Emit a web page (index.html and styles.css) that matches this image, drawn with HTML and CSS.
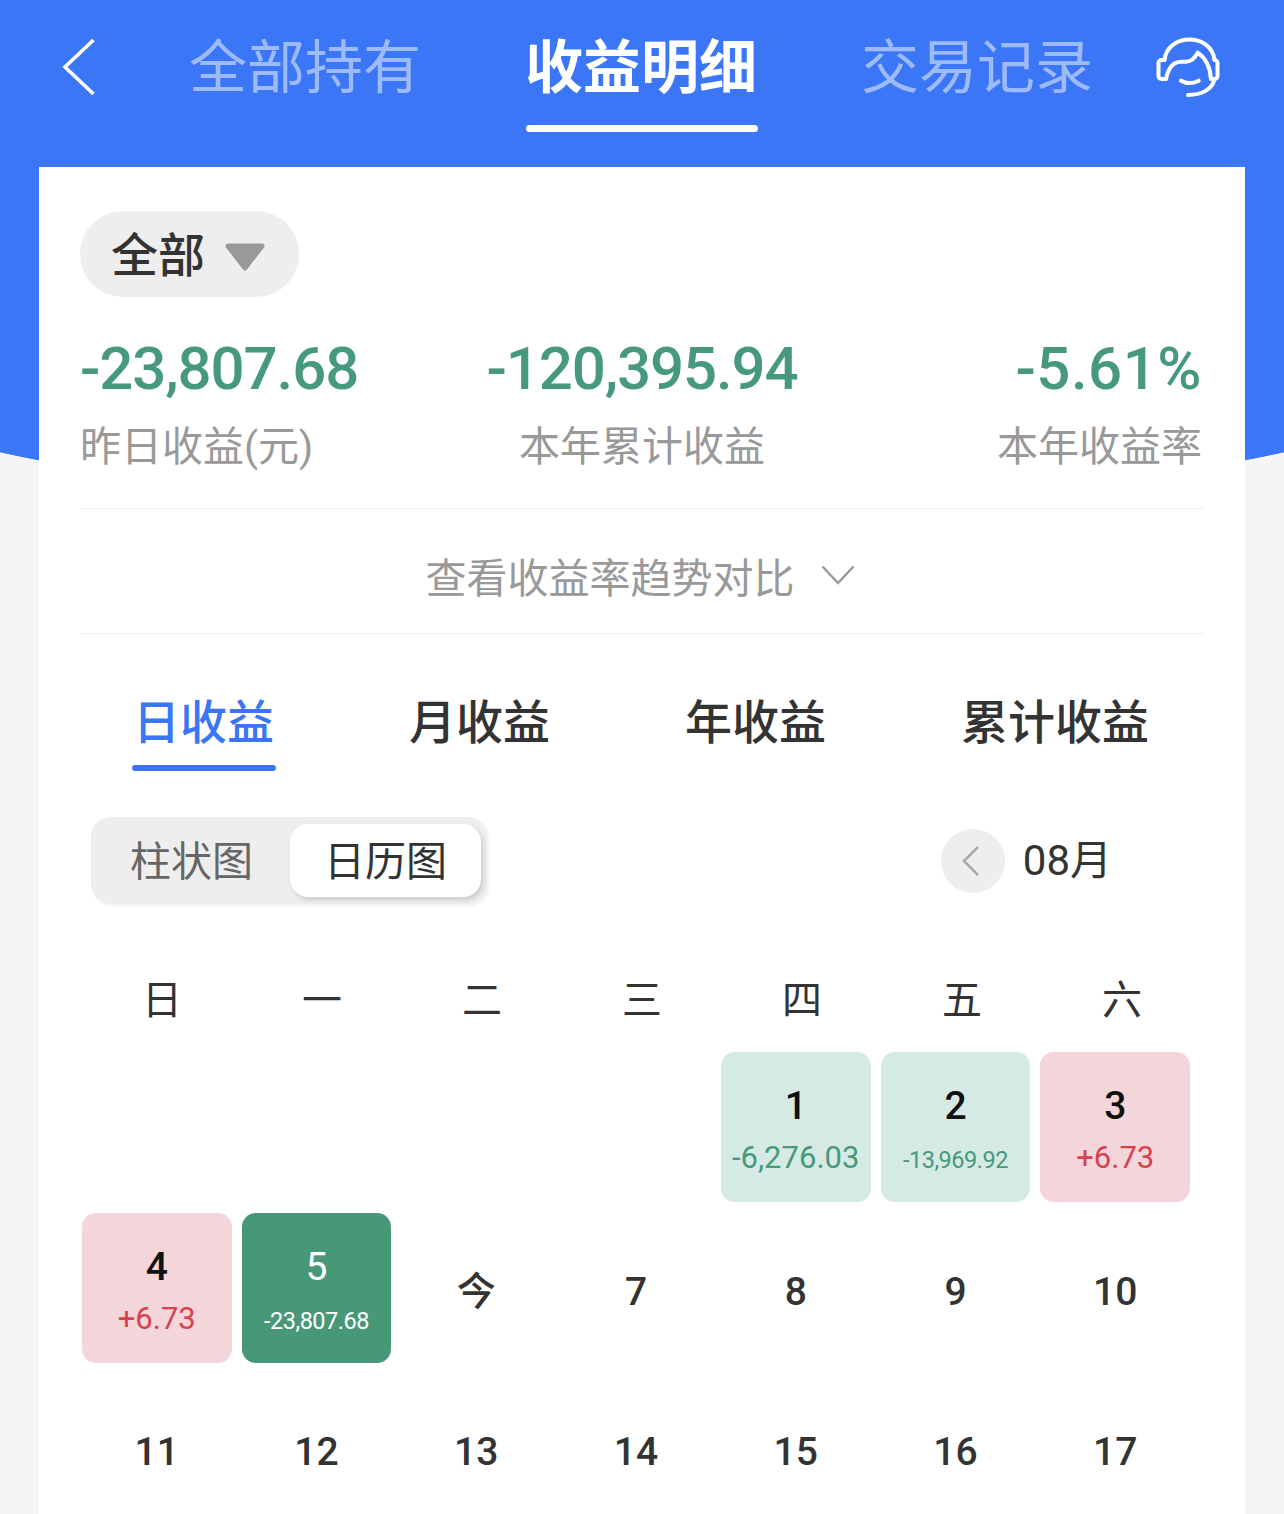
FILE: index.html
```html
<!DOCTYPE html>
<html lang="zh-CN">
<head>
  <meta charset="UTF-8">
  <title>收益明细</title>
  <link rel="stylesheet" href="styles.css">
</head>
<body>
  <!-- Blue backdrop with curved bottom edge -->
  <div class="backdrop"></div>

  <div class="page">
    <header class="topbar">
      <svg class="back" viewBox="0 0 34 58" aria-hidden="true">
        <path d="M31.5 2 L3 29 L31.5 56" />
      </svg>
      <nav class="topnav">
        <a class="topnav-item">全部持有</a>
        <a class="topnav-item active">收益明细</a>
        <a class="topnav-item">交易记录</a>
      </nav>
      <svg class="service" viewBox="0 0 66 62" aria-hidden="true">
        <path d="M9.5 24 C11 11 22 3.5 34.5 3.5 S58 11 59.5 24" />
        <path d="M9.5 24 H6.5 a3 3 0 0 0 -3 3 V40 a3 3 0 0 0 3 3 H11 C13 33 17 26 26 25.7 H31 C36 25.7 40 22 42.7 16.7 C49 21 55 29 56 43 H59.5 a3 3 0 0 0 3 -3 V27 a3 3 0 0 0 -3 -3" />
        <path d="M26 44.7 C31 47.6 38 47.6 43.7 44.7" />
        <path d="M59.3 44 C57 53 47 59 33 59" />
      </svg>
    </header>

    <main class="card">
      <button class="filter">
        <span class="filter-text">全部</span>
        <svg class="filter-arrow" viewBox="0 0 40 28" aria-hidden="true">
          <path d="M3 3 H37 L20 25 Z" />
        </svg>
      </button>

      <section class="stats">
        <div class="stat">
          <div class="stat-value">-23,807.68</div>
          <div class="stat-label">昨日收益(元)</div>
        </div>
        <div class="stat stat-center">
          <div class="stat-value">-120,395.94</div>
          <div class="stat-label">本年累计收益</div>
        </div>
        <div class="stat stat-right">
          <div class="stat-value">-5.61%</div>
          <div class="stat-label">本年收益率</div>
        </div>
      </section>

      <div class="compare">
        查看收益率趋势对比
        <svg class="compare-arrow" viewBox="0 0 34 20" aria-hidden="true">
          <path d="M1.5 1.5 L17 18 L32.5 1.5" />
        </svg>
      </div>

      <div class="period-tabs">
        <a class="period-tab active">日收益</a>
        <a class="period-tab">月收益</a>
        <a class="period-tab">年收益</a>
        <a class="period-tab">累计收益</a>
      </div>

      <div class="chart-bar">
        <div class="segment">
          <span class="segment-item">柱状图</span>
          <span class="segment-item selected">日历图</span>
        </div>
        <div class="month">
          <span class="month-prev">
            <svg viewBox="0 0 20 32" aria-hidden="true"><path d="M17 2 L3 16 L17 30" /></svg>
          </span>
          <span class="month-text">08月</span>
        </div>
      </div>

      <div class="weekdays">
        <span>日</span><span>一</span><span>二</span><span>三</span><span>四</span><span>五</span><span>六</span>
      </div>

      <div class="calendar">
        <div class="day"></div>
        <div class="day"></div>
        <div class="day"></div>
        <div class="day"></div>
        <div class="day chip loss"><b>1</b><span class="amount">-6,276.03</span></div>
        <div class="day chip loss"><b>2</b><span class="amount small">-13,969.92</span></div>
        <div class="day chip gain"><b>3</b><span class="amount">+6.73</span></div>

        <div class="day chip gain"><b>4</b><span class="amount">+6.73</span></div>
        <div class="day chip latest"><b>5</b><span class="amount small">-23,807.68</span></div>
        <div class="day"><b>今</b></div>
        <div class="day"><b>7</b></div>
        <div class="day"><b>8</b></div>
        <div class="day"><b>9</b></div>
        <div class="day"><b>10</b></div>

        <div class="day"><b>11</b></div>
        <div class="day"><b>12</b></div>
        <div class="day"><b>13</b></div>
        <div class="day"><b>14</b></div>
        <div class="day"><b>15</b></div>
        <div class="day"><b>16</b></div>
        <div class="day"><b>17</b></div>
      </div>
    </main>
  </div>
</body>
</html>
```

FILE: styles.css
```css
/* Base */
html, body {
  height: 1514px;
}

body {
  margin: 0;
  background-color: #f5f5f5;
  color: #333;
  font-family: Roboto, "Noto Sans CJK SC", sans-serif;
  overflow: hidden;
  position: relative;
}

.backdrop {
  position: absolute;
  top: 0;
  left: 0;
  width: 100%;
  height: 506px;
  background:
    linear-gradient(#3b76f6, #3b76f6) top / 100% 374px no-repeat,
    radial-gradient(800px 132px at 50% 374px, #3b76f6 99.6%, transparent 100%);
}

.page {
  position: relative;
}

/* Top bar */
.topbar {
  height: 167px;
  box-sizing: border-box;
  padding: 36px 62px 0 62px;
  display: flex;
  align-items: flex-start;
}

.back {
  width: 34px;
  height: 58px;
  margin-top: 2px;
  fill: none;
  stroke: #fff;
  stroke-width: 3.6;
}

.topnav {
  margin-left: 93px;
  display: flex;
  gap: 108px;
}

.topnav-item {
  width: 228px;
  height: 96px;
  position: relative;
  font-size: 58px;
  line-height: 65px;
  font-weight: 400;
  color: rgba(255, 255, 255, 0.5);
  text-align: center;
  white-space: nowrap;
}

.topnav-item.active {
  color: #fff;
  font-weight: 700;
}

.topnav-item.active::after {
  content: "";
  position: absolute;
  left: 1px;
  right: -5px;
  top: 89px;
  height: 7px;
  border-radius: 4px;
  background-color: #fff;
}

.service {
  width: 66px;
  height: 62px;
  margin-left: 66px;
  fill: none;
  stroke: #fff;
  stroke-width: 4;
  stroke-linecap: round;
  stroke-linejoin: round;
}

/* White card */
.card {
  margin: 0 39px;
  height: 1347px;
  box-sizing: border-box;
  padding: 44px 41px 0 41px;
  background-color: #fff;
}

.filter {
  width: 219px;
  height: 86px;
  padding: 0 0 0 31px;
  border: none;
  border-radius: 43px;
  background-color: #eee;
  color: #333;
  font-family: inherit;
  font-size: 47px;
  font-weight: 500;
  display: flex;
  align-items: center;
}

.filter-text {
  margin-bottom: 6px;
}

.filter-arrow {
  width: 40px;
  height: 28px;
  margin-left: 20px;
  margin-top: 6px;
  fill: #999;
  stroke: #999;
  stroke-width: 5;
  stroke-linejoin: round;
}

/* Summary numbers */
.stats {
  display: grid;
  grid-template-columns: 1fr auto 1fr;
  padding-top: 36px;
  padding-bottom: 36px;
  border-bottom: 1px solid #eee;
}

.stat-value {
  font-size: 60px;
  line-height: 72px;
  font-weight: 500;
  letter-spacing: -1.1px;
  color: #46997a;
  white-space: nowrap;
}

.stat-label {
  margin-top: 17px;
  font-size: 41px;
  line-height: 50px;
  color: #999;
  white-space: nowrap;
}

.stat-center {
  text-align: center;
}

.stat-right {
  text-align: right;
  padding-right: 2px;
}

.stat-right .stat-value {
  letter-spacing: 0.5px;
}

/* Trend toggle */
.compare {
  height: 125px;
  box-sizing: border-box;
  padding: 8px 4px 0 0;
  border-bottom: 1px solid #eee;
  display: flex;
  align-items: center;
  justify-content: center;
  gap: 26px;
  font-size: 41px;
  color: #999;
}

.compare-arrow {
  width: 34px;
  height: 20px;
  fill: none;
  stroke: #999;
  stroke-width: 2.4;
}

/* Period tabs */
.period-tabs {
  display: flex;
  gap: 135px;
  padding: 58px 0 0 53px;
  height: 138px;
  box-sizing: border-box;
}

.period-tab {
  position: relative;
  height: 62px;
  font-size: 47px;
  line-height: 62px;
  font-weight: 500;
  color: #333;
  white-space: nowrap;
}

.period-tab.active {
  color: #3b76f6;
}

.period-tab.active::after {
  content: "";
  position: absolute;
  left: -1px;
  right: -2px;
  top: 73px;
  height: 6px;
  border-radius: 3px;
  background-color: #3b76f6;
}

/* Chart switch and month picker */
.chart-bar {
  margin-top: 45px;
  padding-left: 11px;
  padding-right: 92px;
  display: flex;
  justify-content: space-between;
  align-items: center;
}

.segment {
  width: 396px;
  height: 87px;
  box-sizing: border-box;
  padding: 7px 6px 7px 0;
  border-radius: 20px;
  background-color: #eee;
  box-shadow: 2px 2px 3px rgba(0, 0, 0, 0.06);
  display: flex;
  justify-content: space-between;
  align-items: center;
}

.segment-item {
  width: 199px;
  height: 73px;
  padding-left: 2px;
  box-sizing: border-box;
  font-size: 41px;
  line-height: 77px;
  color: #666;
  text-align: center;
}

.segment-item.selected {
  width: 191px;
  padding-left: 0;
  border-radius: 18px;
  background-color: #fff;
  color: #333;
  box-shadow: 2px 3px 5px rgba(0, 0, 0, 0.15);
}

.month {
  display: flex;
  align-items: center;
  gap: 18px;
  font-size: 42px;
  color: #333;
}

.month-text {
  margin-bottom: 8px;
}

.month-prev {
  width: 64px;
  height: 64px;
  border-radius: 50%;
  background-color: #eee;
  display: flex;
  align-items: center;
  justify-content: center;
}

.month-prev svg {
  width: 20px;
  height: 32px;
  margin-right: 4px;
  fill: none;
  stroke: #aaa;
  stroke-width: 2.6;
}

/* Calendar */
.weekdays {
  margin: 72px 0 0 2px;
  width: 1120px;
  display: grid;
  grid-template-columns: repeat(7, 1fr);
  font-size: 40px;
  line-height: 50px;
  text-align: center;
}

.calendar {
  margin: 26px 0 0 2px;
  width: 1108px;
  display: grid;
  grid-template-columns: repeat(7, 1fr);
  grid-auto-rows: 150px;
  gap: 10.5px 10.2px;
}

.day {
  display: flex;
  flex-direction: column;
  align-items: center;
  padding-top: 54px;
  box-sizing: border-box;
}

.day b {
  font-size: 39px;
  line-height: 50px;
  font-weight: 500;
  color: #333;
}

.chip {
  padding-top: 29px;
  border-radius: 14px;
}

.chip b {
  color: #111;
}

.amount {
  margin-top: 2px;
  font-size: 31px;
  line-height: 50px;
  white-space: nowrap;
}

.amount.small {
  margin-top: 4px;
  font-size: 23.5px;
  letter-spacing: -0.5px;
}

.loss {
  background-color: #d5eae5;
  color: #46997a;
}

.gain {
  background-color: #f4d5d9;
  color: #d5424e;
}

.latest {
  background-color: #479877;
  color: #fff;
}

.latest b {
  color: #fff;
  font-weight: 400;
}
```
